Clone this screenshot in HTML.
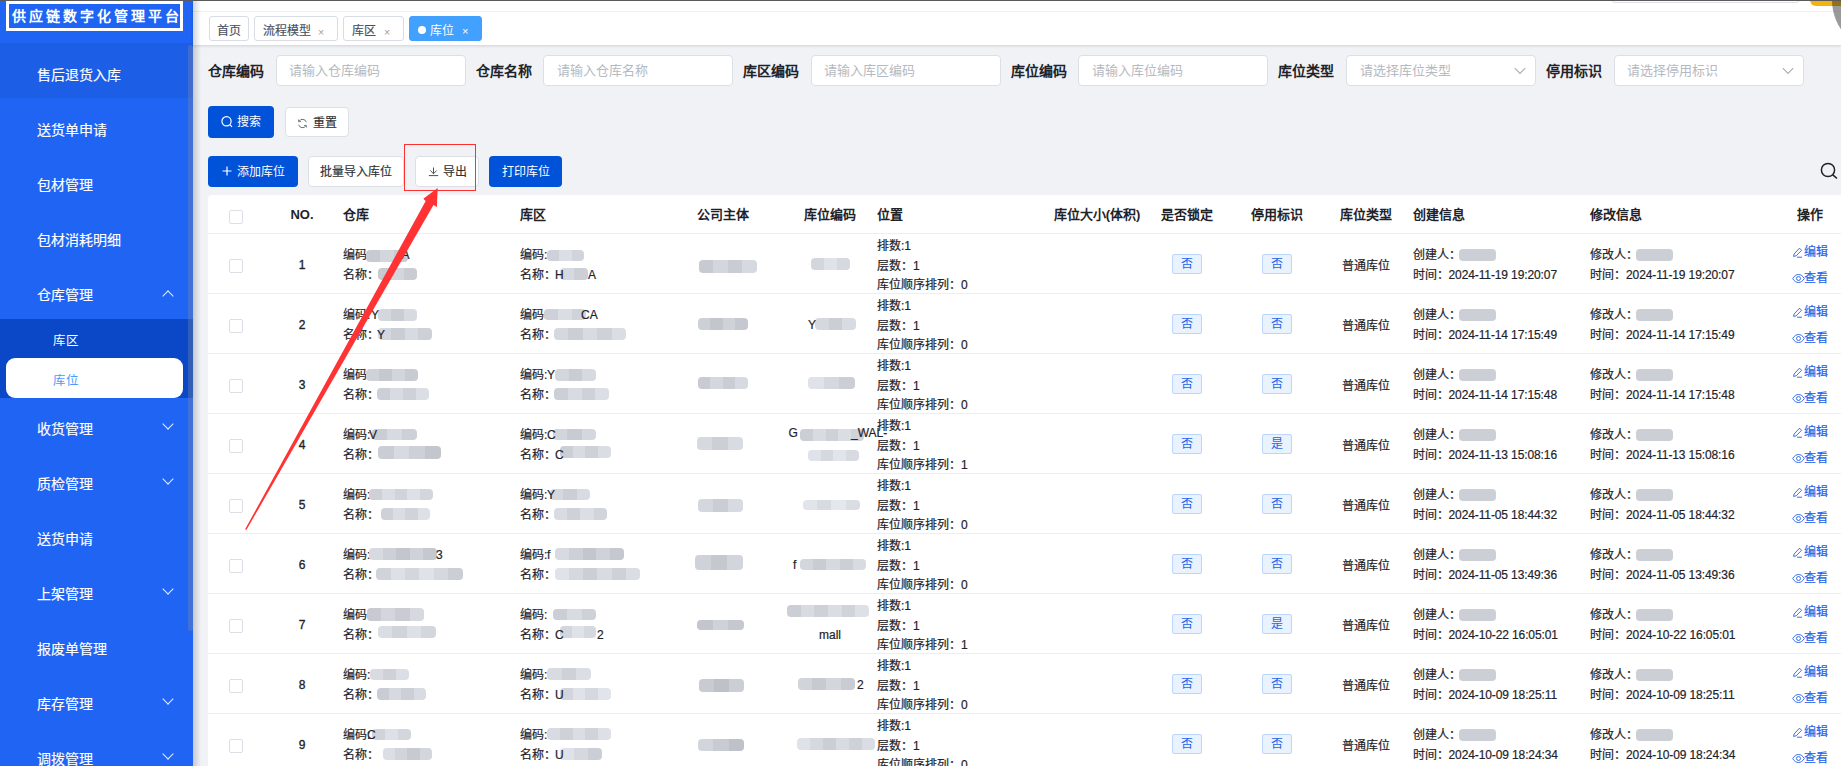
<!DOCTYPE html>
<html lang="zh-CN"><head><meta charset="utf-8"><title>库位</title>
<style>
*{box-sizing:border-box;margin:0;padding:0}
html,body{width:1841px;height:766px;overflow:hidden;background:#f0f2f5;font-family:"Liberation Sans", sans-serif;}
.a{position:absolute;white-space:nowrap}
.sb{position:absolute;left:0;top:0;width:193px;height:766px;background:#1f64f3;overflow:hidden}
.mi{position:absolute;left:37.4px;color:#fff;font-size:14px;line-height:20px;height:20px;-webkit-text-stroke:0.15px #fff}
.chev{position:absolute;left:164px;width:8px;height:8px;border-right:1.3px solid #e6eeff;border-bottom:1.3px solid #e6eeff}
.tab{position:absolute;top:16px;height:25px;border:1px solid #d8dce5;border-radius:3px;background:#fff;font-size:12px;color:#495060;line-height:29px;-webkit-text-stroke:0.15px #495060}
.lbl{position:absolute;top:61px;font-size:14px;font-weight:bold;color:#1f2329;line-height:20px}
.inp{position:absolute;top:55px;width:190px;height:31px;background:#fff;border:1px solid #dcdfe6;border-radius:4px;font-size:13px;color:#b5b9c1;line-height:29px;padding-left:12.5px}
.btn{position:absolute;height:32px;border-radius:4px;font-size:12px;line-height:32px;text-align:center}
.bp{background:#0052d9;color:#fff}
.bw{background:#fff;color:#303133;border:1px solid #dcdfe6;line-height:30px;-webkit-text-stroke:0.15px #303133}
.th{position:absolute;top:205px;font-size:13px;font-weight:bold;color:#1f2329;line-height:20px}
.td{position:absolute;font-size:12px;color:#1f2329;line-height:20px;-webkit-text-stroke:0.2px #1f2329}
.tag{position:absolute;width:30px;height:20px;background:#e9f2ff;border:1px solid #bcd6fb;border-radius:2px;color:#1f63e8;font-size:12px;line-height:18px;text-align:center}
.cb{position:absolute;left:229px;width:14px;height:14px;border:1px solid #dcdfe6;border-radius:2px;background:#fff}
.bl{position:absolute;background:#cfd1d7;border-radius:4px;filter:blur(0.6px)}
.lnk{position:absolute;left:1792px;font-size:12px;color:#2563e6;line-height:20px;-webkit-text-stroke:0.2px #2563e6}
</style></head><body>

<div class="sb">
<div class="a" style="left:0;top:42.8px;width:193px;height:55.4px;background:#1d5ee7"></div>
<div class="a" style="left:6px;top:1px;width:177px;height:29.5px;border:3px solid #fff"></div>
<div class="a" style="left:12px;top:6px;font-size:14px;font-weight:bold;color:#fff;letter-spacing:3px;line-height:20px">供应链数字化管理平台</div>
<div class="a" style="left:0;top:319px;width:193px;height:79px;background:#0b48c8"></div>
<div class="a" style="left:6.2px;top:358.3px;width:177.2px;height:39.4px;background:#fff;border-radius:9px"></div>
<div class="a" style="left:53px;top:331px;font-size:12.5px;color:#fff;line-height:20px">库区</div>
<div class="a" style="left:53px;top:370.5px;font-size:12.5px;color:#4a9bff;line-height:20px">库位</div>
<div class="mi" style="top:64.9px">售后退货入库</div>
<div class="mi" style="top:119.9px">送货单申请</div>
<div class="mi" style="top:175.0px">包材管理</div>
<div class="mi" style="top:230.0px">包材消耗明细</div>
<div class="mi" style="top:285.1px">仓库管理</div>
<div class="chev" style="top:292.1px;transform:rotate(-135deg)"></div>
<div class="mi" style="top:418.8px">收货管理</div>
<div class="chev" style="top:419.8px;transform:rotate(45deg)"></div>
<div class="mi" style="top:473.9px">质检管理</div>
<div class="chev" style="top:474.9px;transform:rotate(45deg)"></div>
<div class="mi" style="top:528.9px">送货申请</div>
<div class="mi" style="top:584.0px">上架管理</div>
<div class="chev" style="top:585.0px;transform:rotate(45deg)"></div>
<div class="mi" style="top:639.0px">报废单管理</div>
<div class="mi" style="top:694.0px">库存管理</div>
<div class="chev" style="top:695.0px;transform:rotate(45deg)"></div>
<div class="mi" style="top:749.1px">调拨管理</div>
<div class="chev" style="top:750.1px;transform:rotate(45deg)"></div>
<div class="a" style="left:187.5px;top:45px;width:5.5px;height:586px;background:rgba(144,147,153,0.3);border-radius:3px"></div>
</div>
<div class="a" style="left:193px;top:0;width:1648px;height:44.5px;background:#fff;box-shadow:0 1px 3px 0 rgba(0,0,0,.12),0 0 3px 0 rgba(0,0,0,.04)"></div>
<div class="a" style="left:193px;top:11px;width:1648px;height:1px;background:#f0f0f0"></div>
<div class="a" style="left:193px;top:0;width:8px;height:766px;background:linear-gradient(to right,rgba(0,21,41,0.18),rgba(0,21,41,0))"></div>
<div class="tab" style="left:208.5px;width:40px;text-align:center">首页</div>
<div class="tab" style="left:254px;width:83.5px;padding-left:7.5px">流程模型<span class="a" style="left:63px;top:0.5px;font-size:10.5px;color:#9a9ea6;-webkit-text-stroke:0">×</span></div>
<div class="tab" style="left:343px;width:60.5px;padding-left:7.5px">库区<span class="a" style="left:40px;top:0.5px;font-size:10.5px;color:#9a9ea6;-webkit-text-stroke:0">×</span></div>
<div class="tab" style="left:409px;top:15.8px;height:25.2px;width:72.5px;background:#42a0ff;border-color:#42a0ff;color:#fff;-webkit-text-stroke:0;padding-left:20px">库位<span class="a" style="left:7.6px;top:9.2px;width:8px;height:8px;border-radius:50%;background:#fff"></span><span class="a" style="left:52px;top:0.5px;font-size:11px;color:#fff">×</span></div>
<div class="lbl" style="left:208.0px">仓库编码</div>
<div class="inp" style="left:275.6px">请输入仓库编码</div>
<div class="lbl" style="left:475.6px">仓库名称</div>
<div class="inp" style="left:543.2px">请输入仓库名称</div>
<div class="lbl" style="left:743.2px">库区编码</div>
<div class="inp" style="left:810.8px">请输入库区编码</div>
<div class="lbl" style="left:1010.8px">库位编码</div>
<div class="inp" style="left:1078.4px">请输入库位编码</div>
<div class="lbl" style="left:1278.4px">库位类型</div>
<div class="inp" style="left:1346.0px">请选择库位类型</div>
<svg class="a" style="left:1513.0px;top:66px" width="14" height="10" viewBox="0 0 14 10"><path d="M1.8 2.2L7 7.4L12.2 2.2" fill="none" stroke="#a8adb7" stroke-width="1.1"/></svg>
<div class="lbl" style="left:1546.0px">停用标识</div>
<div class="inp" style="left:1613.6px">请选择停用标识</div>
<svg class="a" style="left:1780.6px;top:66px" width="14" height="10" viewBox="0 0 14 10"><path d="M1.8 2.2L7 7.4L12.2 2.2" fill="none" stroke="#a8adb7" stroke-width="1.1"/></svg>
<div class="btn bp" style="left:208px;top:106px;width:66px;padding-left:16.5px"><svg class="a" style="left:13px;top:10px" width="12" height="12" viewBox="0 0 12 12"><circle cx="5.5" cy="5.3" r="4.6" fill="none" stroke="#fff" stroke-width="1.2"/><path d="M8.8 8.6L11 10.8" stroke="#fff" stroke-width="1.2"/></svg>搜索</div>
<div class="btn bw" style="left:284.7px;top:106.7px;width:64.3px;height:30.7px;padding-left:16.5px"><svg class="a" style="left:11.8px;top:10px" width="11" height="11" viewBox="0 0 11 11"><path d="M9.3 4.2A4 4 0 0 0 2 3.3" fill="none" stroke="#6b7079" stroke-width="1"/><path d="M1.7 6.8A4 4 0 0 0 9 7.7" fill="none" stroke="#6b7079" stroke-width="1"/><path d="M1.3 1.5L1.8 3.8L4 3.3" fill="none" stroke="#6b7079" stroke-width="0.9"/><path d="M9.7 9.5L9.2 7.2L7 7.7" fill="none" stroke="#6b7079" stroke-width="0.9"/></svg>重置</div>
<div class="btn bp" style="left:208px;top:155.5px;width:89.5px;height:31.5px;line-height:33.5px;padding-left:17px"><svg class="a" style="left:14px;top:10px" width="10" height="10" viewBox="0 0 10 10"><path d="M5 0.5V9.5M0.5 5H9.5" stroke="#fff" stroke-width="1.2"/></svg>添加库位</div>
<div class="btn bw" style="left:307.5px;top:155.5px;width:96px;height:31.5px;line-height:31.5px">批量导入库位</div>
<div class="btn bw" style="left:414.8px;top:155.8px;width:64.2px;height:31.2px;line-height:31.5px;padding-left:17px"><svg class="a" style="left:12px;top:10px" width="11" height="10" viewBox="0 0 11 10"><path d="M5.5 0.5V6.6M2.3 3.5L5.5 6.7L8.7 3.5" fill="none" stroke="#3a3f47" stroke-width="0.9"/><path d="M0.8 8.6H10.2" stroke="#3a3f47" stroke-width="0.9"/></svg>导出</div>
<div class="btn bp" style="left:489.3px;top:155.5px;width:73px;height:31.5px;line-height:33.5px">打印库位</div>
<svg class="a" style="left:1818px;top:160px" width="23" height="22" viewBox="0 0 23 22"><circle cx="10" cy="10" r="6.6" fill="none" stroke="#1f2329" stroke-width="1.5"/><path d="M14.8 14.8L19 18.5" stroke="#1f2329" stroke-width="1.6"/></svg>
<div class="a" style="left:208px;top:195px;width:1640px;height:600px;background:#fff;border-radius:4px 0 0 0"></div>
<div class="a" style="left:208px;top:233px;width:1633px;height:1px;background:#ebeef5"></div>
<div class="a" style="left:208px;top:293px;width:1633px;height:1px;background:#ebeef5"></div>
<div class="a" style="left:208px;top:353px;width:1633px;height:1px;background:#ebeef5"></div>
<div class="a" style="left:208px;top:413px;width:1633px;height:1px;background:#ebeef5"></div>
<div class="a" style="left:208px;top:473px;width:1633px;height:1px;background:#ebeef5"></div>
<div class="a" style="left:208px;top:533px;width:1633px;height:1px;background:#ebeef5"></div>
<div class="a" style="left:208px;top:593px;width:1633px;height:1px;background:#ebeef5"></div>
<div class="a" style="left:208px;top:653px;width:1633px;height:1px;background:#ebeef5"></div>
<div class="a" style="left:208px;top:713px;width:1633px;height:1px;background:#ebeef5"></div>
<div class="a" style="left:208px;top:773px;width:1633px;height:1px;background:#ebeef5"></div>
<div class="cb" style="top:210px"></div>
<div class="th" style="left:282.0px;width:40px;text-align:center">NO.</div>
<div class="th" style="left:343px">仓库</div>
<div class="th" style="left:520px">库区</div>
<div class="th" style="left:682.7px;width:80px;text-align:center">公司主体</div>
<div class="th" style="left:790.0px;width:80px;text-align:center">库位编码</div>
<div class="th" style="left:877px">位置</div>
<div class="th" style="left:1037.0px;width:120px;text-align:center">库位大小(体积)</div>
<div class="th" style="left:1147.0px;width:80px;text-align:center">是否锁定</div>
<div class="th" style="left:1236.5px;width:80px;text-align:center">停用标识</div>
<div class="th" style="left:1326.0px;width:80px;text-align:center">库位类型</div>
<div class="th" style="left:1412.5px">创建信息</div>
<div class="th" style="left:1590px">修改信息</div>
<div class="th" style="left:1779.5px;width:60px;text-align:center">操作</div>
<div class="cb" style="top:258.5px"></div>
<div class="td" style="left:282px;width:40px;text-align:center;top:254.8px;-webkit-text-stroke:0.35px #1f2329">1</div>
<div class="td" style="left:343px;top:245px">编码:</div>
<div class="td" style="left:343px;top:265px">名称：</div>
<div class="td" style="left:520px;top:245px">编码:</div>
<div class="td" style="left:520px;top:265px">名称：</div>
<div class="td" style="left:877px;top:235.5px">排数:1</div>
<div class="td" style="left:877px;top:255.5px">层数：1</div>
<div class="td" style="left:877px;top:275.3px">库位顺序排列：0</div>
<div class="tag" style="left:1172px;top:253.7px">否</div>
<div class="tag" style="left:1262px;top:253.7px">否</div>
<div class="td" style="left:1326px;width:80px;text-align:center;top:255.5px">普通库位</div>
<div class="td" style="left:1412.5px;top:245px">创建人：</div>
<div class="td" style="left:1412.5px;top:265.3px">时间：<span style="letter-spacing:-0.11px">2024-11-19 19:20:07</span></div>
<div class="td" style="left:1590px;top:245px">修改人：</div>
<div class="td" style="left:1590px;top:265.3px">时间：<span style="letter-spacing:-0.11px">2024-11-19 19:20:07</span></div>
<div class="lnk" style="top:242px;padding-left:11.8px"><svg class="a" style="left:0;top:5px" width="11" height="11" viewBox="0 0 11 11"><path d="M7.5 1.2L9.6 3.3L4 8.9L1.6 9.4L2.1 7Z" fill="none" stroke="#2563e6" stroke-width="0.9"/><path d="M5 10.2H10" stroke="#2563e6" stroke-width="0.9"/></svg>编辑</div>
<div class="lnk" style="top:268px;padding-left:11.8px"><svg class="a" style="left:-0.5px;top:5px" width="13" height="11" viewBox="0 0 13 11"><path d="M0.7 5.5C2.5 2.5 4.5 1.5 6.5 1.5S10.5 2.5 12.3 5.5C10.5 8.5 8.5 9.5 6.5 9.5S2.5 8.5 0.7 5.5Z" fill="none" stroke="#2563e6" stroke-width="0.9"/><circle cx="6.5" cy="5.5" r="2" fill="none" stroke="#2563e6" stroke-width="0.9"/></svg>查看</div>
<div class="cb" style="top:318.5px"></div>
<div class="td" style="left:282px;width:40px;text-align:center;top:314.8px;-webkit-text-stroke:0.35px #1f2329">2</div>
<div class="td" style="left:343px;top:305px">编码:</div>
<div class="td" style="left:343px;top:325px">名称：</div>
<div class="td" style="left:520px;top:305px">编码:</div>
<div class="td" style="left:520px;top:325px">名称：</div>
<div class="td" style="left:877px;top:295.5px">排数:1</div>
<div class="td" style="left:877px;top:315.5px">层数：1</div>
<div class="td" style="left:877px;top:335.3px">库位顺序排列：0</div>
<div class="tag" style="left:1172px;top:313.7px">否</div>
<div class="tag" style="left:1262px;top:313.7px">否</div>
<div class="td" style="left:1326px;width:80px;text-align:center;top:315.5px">普通库位</div>
<div class="td" style="left:1412.5px;top:305px">创建人：</div>
<div class="td" style="left:1412.5px;top:325.3px">时间：<span style="letter-spacing:-0.11px">2024-11-14 17:15:49</span></div>
<div class="td" style="left:1590px;top:305px">修改人：</div>
<div class="td" style="left:1590px;top:325.3px">时间：<span style="letter-spacing:-0.11px">2024-11-14 17:15:49</span></div>
<div class="lnk" style="top:302px;padding-left:11.8px"><svg class="a" style="left:0;top:5px" width="11" height="11" viewBox="0 0 11 11"><path d="M7.5 1.2L9.6 3.3L4 8.9L1.6 9.4L2.1 7Z" fill="none" stroke="#2563e6" stroke-width="0.9"/><path d="M5 10.2H10" stroke="#2563e6" stroke-width="0.9"/></svg>编辑</div>
<div class="lnk" style="top:328px;padding-left:11.8px"><svg class="a" style="left:-0.5px;top:5px" width="13" height="11" viewBox="0 0 13 11"><path d="M0.7 5.5C2.5 2.5 4.5 1.5 6.5 1.5S10.5 2.5 12.3 5.5C10.5 8.5 8.5 9.5 6.5 9.5S2.5 8.5 0.7 5.5Z" fill="none" stroke="#2563e6" stroke-width="0.9"/><circle cx="6.5" cy="5.5" r="2" fill="none" stroke="#2563e6" stroke-width="0.9"/></svg>查看</div>
<div class="cb" style="top:378.5px"></div>
<div class="td" style="left:282px;width:40px;text-align:center;top:374.8px;-webkit-text-stroke:0.35px #1f2329">3</div>
<div class="td" style="left:343px;top:365px">编码:</div>
<div class="td" style="left:343px;top:385px">名称：</div>
<div class="td" style="left:520px;top:365px">编码:</div>
<div class="td" style="left:520px;top:385px">名称：</div>
<div class="td" style="left:877px;top:355.5px">排数:1</div>
<div class="td" style="left:877px;top:375.5px">层数：1</div>
<div class="td" style="left:877px;top:395.3px">库位顺序排列：0</div>
<div class="tag" style="left:1172px;top:373.7px">否</div>
<div class="tag" style="left:1262px;top:373.7px">否</div>
<div class="td" style="left:1326px;width:80px;text-align:center;top:375.5px">普通库位</div>
<div class="td" style="left:1412.5px;top:365px">创建人：</div>
<div class="td" style="left:1412.5px;top:385.3px">时间：<span style="letter-spacing:-0.11px">2024-11-14 17:15:48</span></div>
<div class="td" style="left:1590px;top:365px">修改人：</div>
<div class="td" style="left:1590px;top:385.3px">时间：<span style="letter-spacing:-0.11px">2024-11-14 17:15:48</span></div>
<div class="lnk" style="top:362px;padding-left:11.8px"><svg class="a" style="left:0;top:5px" width="11" height="11" viewBox="0 0 11 11"><path d="M7.5 1.2L9.6 3.3L4 8.9L1.6 9.4L2.1 7Z" fill="none" stroke="#2563e6" stroke-width="0.9"/><path d="M5 10.2H10" stroke="#2563e6" stroke-width="0.9"/></svg>编辑</div>
<div class="lnk" style="top:388px;padding-left:11.8px"><svg class="a" style="left:-0.5px;top:5px" width="13" height="11" viewBox="0 0 13 11"><path d="M0.7 5.5C2.5 2.5 4.5 1.5 6.5 1.5S10.5 2.5 12.3 5.5C10.5 8.5 8.5 9.5 6.5 9.5S2.5 8.5 0.7 5.5Z" fill="none" stroke="#2563e6" stroke-width="0.9"/><circle cx="6.5" cy="5.5" r="2" fill="none" stroke="#2563e6" stroke-width="0.9"/></svg>查看</div>
<div class="cb" style="top:438.5px"></div>
<div class="td" style="left:282px;width:40px;text-align:center;top:434.8px;-webkit-text-stroke:0.35px #1f2329">4</div>
<div class="td" style="left:343px;top:425px">编码:</div>
<div class="td" style="left:343px;top:445px">名称：</div>
<div class="td" style="left:520px;top:425px">编码:</div>
<div class="td" style="left:520px;top:445px">名称：</div>
<div class="td" style="left:877px;top:415.5px">排数:1</div>
<div class="td" style="left:877px;top:435.5px">层数：1</div>
<div class="td" style="left:877px;top:455.3px">库位顺序排列：1</div>
<div class="tag" style="left:1172px;top:433.7px">否</div>
<div class="tag" style="left:1262px;top:433.7px">是</div>
<div class="td" style="left:1326px;width:80px;text-align:center;top:435.5px">普通库位</div>
<div class="td" style="left:1412.5px;top:425px">创建人：</div>
<div class="td" style="left:1412.5px;top:445.3px">时间：<span style="letter-spacing:-0.11px">2024-11-13 15:08:16</span></div>
<div class="td" style="left:1590px;top:425px">修改人：</div>
<div class="td" style="left:1590px;top:445.3px">时间：<span style="letter-spacing:-0.11px">2024-11-13 15:08:16</span></div>
<div class="lnk" style="top:422px;padding-left:11.8px"><svg class="a" style="left:0;top:5px" width="11" height="11" viewBox="0 0 11 11"><path d="M7.5 1.2L9.6 3.3L4 8.9L1.6 9.4L2.1 7Z" fill="none" stroke="#2563e6" stroke-width="0.9"/><path d="M5 10.2H10" stroke="#2563e6" stroke-width="0.9"/></svg>编辑</div>
<div class="lnk" style="top:448px;padding-left:11.8px"><svg class="a" style="left:-0.5px;top:5px" width="13" height="11" viewBox="0 0 13 11"><path d="M0.7 5.5C2.5 2.5 4.5 1.5 6.5 1.5S10.5 2.5 12.3 5.5C10.5 8.5 8.5 9.5 6.5 9.5S2.5 8.5 0.7 5.5Z" fill="none" stroke="#2563e6" stroke-width="0.9"/><circle cx="6.5" cy="5.5" r="2" fill="none" stroke="#2563e6" stroke-width="0.9"/></svg>查看</div>
<div class="cb" style="top:498.5px"></div>
<div class="td" style="left:282px;width:40px;text-align:center;top:494.8px;-webkit-text-stroke:0.35px #1f2329">5</div>
<div class="td" style="left:343px;top:485px">编码:</div>
<div class="td" style="left:343px;top:505px">名称：</div>
<div class="td" style="left:520px;top:485px">编码:</div>
<div class="td" style="left:520px;top:505px">名称：</div>
<div class="td" style="left:877px;top:475.5px">排数:1</div>
<div class="td" style="left:877px;top:495.5px">层数：1</div>
<div class="td" style="left:877px;top:515.3px">库位顺序排列：0</div>
<div class="tag" style="left:1172px;top:493.7px">否</div>
<div class="tag" style="left:1262px;top:493.7px">否</div>
<div class="td" style="left:1326px;width:80px;text-align:center;top:495.5px">普通库位</div>
<div class="td" style="left:1412.5px;top:485px">创建人：</div>
<div class="td" style="left:1412.5px;top:505.3px">时间：<span style="letter-spacing:-0.11px">2024-11-05 18:44:32</span></div>
<div class="td" style="left:1590px;top:485px">修改人：</div>
<div class="td" style="left:1590px;top:505.3px">时间：<span style="letter-spacing:-0.11px">2024-11-05 18:44:32</span></div>
<div class="lnk" style="top:482px;padding-left:11.8px"><svg class="a" style="left:0;top:5px" width="11" height="11" viewBox="0 0 11 11"><path d="M7.5 1.2L9.6 3.3L4 8.9L1.6 9.4L2.1 7Z" fill="none" stroke="#2563e6" stroke-width="0.9"/><path d="M5 10.2H10" stroke="#2563e6" stroke-width="0.9"/></svg>编辑</div>
<div class="lnk" style="top:508px;padding-left:11.8px"><svg class="a" style="left:-0.5px;top:5px" width="13" height="11" viewBox="0 0 13 11"><path d="M0.7 5.5C2.5 2.5 4.5 1.5 6.5 1.5S10.5 2.5 12.3 5.5C10.5 8.5 8.5 9.5 6.5 9.5S2.5 8.5 0.7 5.5Z" fill="none" stroke="#2563e6" stroke-width="0.9"/><circle cx="6.5" cy="5.5" r="2" fill="none" stroke="#2563e6" stroke-width="0.9"/></svg>查看</div>
<div class="cb" style="top:558.5px"></div>
<div class="td" style="left:282px;width:40px;text-align:center;top:554.8px;-webkit-text-stroke:0.35px #1f2329">6</div>
<div class="td" style="left:343px;top:545px">编码:</div>
<div class="td" style="left:343px;top:565px">名称：</div>
<div class="td" style="left:520px;top:545px">编码:</div>
<div class="td" style="left:520px;top:565px">名称：</div>
<div class="td" style="left:877px;top:535.5px">排数:1</div>
<div class="td" style="left:877px;top:555.5px">层数：1</div>
<div class="td" style="left:877px;top:575.3px">库位顺序排列：0</div>
<div class="tag" style="left:1172px;top:553.7px">否</div>
<div class="tag" style="left:1262px;top:553.7px">否</div>
<div class="td" style="left:1326px;width:80px;text-align:center;top:555.5px">普通库位</div>
<div class="td" style="left:1412.5px;top:545px">创建人：</div>
<div class="td" style="left:1412.5px;top:565.3px">时间：<span style="letter-spacing:-0.11px">2024-11-05 13:49:36</span></div>
<div class="td" style="left:1590px;top:545px">修改人：</div>
<div class="td" style="left:1590px;top:565.3px">时间：<span style="letter-spacing:-0.11px">2024-11-05 13:49:36</span></div>
<div class="lnk" style="top:542px;padding-left:11.8px"><svg class="a" style="left:0;top:5px" width="11" height="11" viewBox="0 0 11 11"><path d="M7.5 1.2L9.6 3.3L4 8.9L1.6 9.4L2.1 7Z" fill="none" stroke="#2563e6" stroke-width="0.9"/><path d="M5 10.2H10" stroke="#2563e6" stroke-width="0.9"/></svg>编辑</div>
<div class="lnk" style="top:568px;padding-left:11.8px"><svg class="a" style="left:-0.5px;top:5px" width="13" height="11" viewBox="0 0 13 11"><path d="M0.7 5.5C2.5 2.5 4.5 1.5 6.5 1.5S10.5 2.5 12.3 5.5C10.5 8.5 8.5 9.5 6.5 9.5S2.5 8.5 0.7 5.5Z" fill="none" stroke="#2563e6" stroke-width="0.9"/><circle cx="6.5" cy="5.5" r="2" fill="none" stroke="#2563e6" stroke-width="0.9"/></svg>查看</div>
<div class="cb" style="top:618.5px"></div>
<div class="td" style="left:282px;width:40px;text-align:center;top:614.8px;-webkit-text-stroke:0.35px #1f2329">7</div>
<div class="td" style="left:343px;top:605px">编码:</div>
<div class="td" style="left:343px;top:625px">名称：</div>
<div class="td" style="left:520px;top:605px">编码:</div>
<div class="td" style="left:520px;top:625px">名称：</div>
<div class="td" style="left:877px;top:595.5px">排数:1</div>
<div class="td" style="left:877px;top:615.5px">层数：1</div>
<div class="td" style="left:877px;top:635.3px">库位顺序排列：1</div>
<div class="tag" style="left:1172px;top:613.7px">否</div>
<div class="tag" style="left:1262px;top:613.7px">是</div>
<div class="td" style="left:1326px;width:80px;text-align:center;top:615.5px">普通库位</div>
<div class="td" style="left:1412.5px;top:605px">创建人：</div>
<div class="td" style="left:1412.5px;top:625.3px">时间：<span style="letter-spacing:-0.11px">2024-10-22 16:05:01</span></div>
<div class="td" style="left:1590px;top:605px">修改人：</div>
<div class="td" style="left:1590px;top:625.3px">时间：<span style="letter-spacing:-0.11px">2024-10-22 16:05:01</span></div>
<div class="lnk" style="top:602px;padding-left:11.8px"><svg class="a" style="left:0;top:5px" width="11" height="11" viewBox="0 0 11 11"><path d="M7.5 1.2L9.6 3.3L4 8.9L1.6 9.4L2.1 7Z" fill="none" stroke="#2563e6" stroke-width="0.9"/><path d="M5 10.2H10" stroke="#2563e6" stroke-width="0.9"/></svg>编辑</div>
<div class="lnk" style="top:628px;padding-left:11.8px"><svg class="a" style="left:-0.5px;top:5px" width="13" height="11" viewBox="0 0 13 11"><path d="M0.7 5.5C2.5 2.5 4.5 1.5 6.5 1.5S10.5 2.5 12.3 5.5C10.5 8.5 8.5 9.5 6.5 9.5S2.5 8.5 0.7 5.5Z" fill="none" stroke="#2563e6" stroke-width="0.9"/><circle cx="6.5" cy="5.5" r="2" fill="none" stroke="#2563e6" stroke-width="0.9"/></svg>查看</div>
<div class="cb" style="top:678.5px"></div>
<div class="td" style="left:282px;width:40px;text-align:center;top:674.8px;-webkit-text-stroke:0.35px #1f2329">8</div>
<div class="td" style="left:343px;top:665px">编码:</div>
<div class="td" style="left:343px;top:685px">名称：</div>
<div class="td" style="left:520px;top:665px">编码:</div>
<div class="td" style="left:520px;top:685px">名称：</div>
<div class="td" style="left:877px;top:655.5px">排数:1</div>
<div class="td" style="left:877px;top:675.5px">层数：1</div>
<div class="td" style="left:877px;top:695.3px">库位顺序排列：0</div>
<div class="tag" style="left:1172px;top:673.7px">否</div>
<div class="tag" style="left:1262px;top:673.7px">否</div>
<div class="td" style="left:1326px;width:80px;text-align:center;top:675.5px">普通库位</div>
<div class="td" style="left:1412.5px;top:665px">创建人：</div>
<div class="td" style="left:1412.5px;top:685.3px">时间：<span style="letter-spacing:-0.11px">2024-10-09 18:25:11</span></div>
<div class="td" style="left:1590px;top:665px">修改人：</div>
<div class="td" style="left:1590px;top:685.3px">时间：<span style="letter-spacing:-0.11px">2024-10-09 18:25:11</span></div>
<div class="lnk" style="top:662px;padding-left:11.8px"><svg class="a" style="left:0;top:5px" width="11" height="11" viewBox="0 0 11 11"><path d="M7.5 1.2L9.6 3.3L4 8.9L1.6 9.4L2.1 7Z" fill="none" stroke="#2563e6" stroke-width="0.9"/><path d="M5 10.2H10" stroke="#2563e6" stroke-width="0.9"/></svg>编辑</div>
<div class="lnk" style="top:688px;padding-left:11.8px"><svg class="a" style="left:-0.5px;top:5px" width="13" height="11" viewBox="0 0 13 11"><path d="M0.7 5.5C2.5 2.5 4.5 1.5 6.5 1.5S10.5 2.5 12.3 5.5C10.5 8.5 8.5 9.5 6.5 9.5S2.5 8.5 0.7 5.5Z" fill="none" stroke="#2563e6" stroke-width="0.9"/><circle cx="6.5" cy="5.5" r="2" fill="none" stroke="#2563e6" stroke-width="0.9"/></svg>查看</div>
<div class="cb" style="top:738.5px"></div>
<div class="td" style="left:282px;width:40px;text-align:center;top:734.8px;-webkit-text-stroke:0.35px #1f2329">9</div>
<div class="td" style="left:343px;top:725px">编码:</div>
<div class="td" style="left:343px;top:745px">名称：</div>
<div class="td" style="left:520px;top:725px">编码:</div>
<div class="td" style="left:520px;top:745px">名称：</div>
<div class="td" style="left:877px;top:715.5px">排数:1</div>
<div class="td" style="left:877px;top:735.5px">层数：1</div>
<div class="td" style="left:877px;top:755.3px">库位顺序排列：0</div>
<div class="tag" style="left:1172px;top:733.7px">否</div>
<div class="tag" style="left:1262px;top:733.7px">否</div>
<div class="td" style="left:1326px;width:80px;text-align:center;top:735.5px">普通库位</div>
<div class="td" style="left:1412.5px;top:725px">创建人：</div>
<div class="td" style="left:1412.5px;top:745.3px">时间：<span style="letter-spacing:-0.11px">2024-10-09 18:24:34</span></div>
<div class="td" style="left:1590px;top:725px">修改人：</div>
<div class="td" style="left:1590px;top:745.3px">时间：<span style="letter-spacing:-0.11px">2024-10-09 18:24:34</span></div>
<div class="lnk" style="top:722px;padding-left:11.8px"><svg class="a" style="left:0;top:5px" width="11" height="11" viewBox="0 0 11 11"><path d="M7.5 1.2L9.6 3.3L4 8.9L1.6 9.4L2.1 7Z" fill="none" stroke="#2563e6" stroke-width="0.9"/><path d="M5 10.2H10" stroke="#2563e6" stroke-width="0.9"/></svg>编辑</div>
<div class="lnk" style="top:748px;padding-left:11.8px"><svg class="a" style="left:-0.5px;top:5px" width="13" height="11" viewBox="0 0 13 11"><path d="M0.7 5.5C2.5 2.5 4.5 1.5 6.5 1.5S10.5 2.5 12.3 5.5C10.5 8.5 8.5 9.5 6.5 9.5S2.5 8.5 0.7 5.5Z" fill="none" stroke="#2563e6" stroke-width="0.9"/><circle cx="6.5" cy="5.5" r="2" fill="none" stroke="#2563e6" stroke-width="0.9"/></svg>查看</div>
<div class="bl" style="left:366px;top:250.0px;width:42px;height:12px;background:linear-gradient(to right,rgb(199,202,209) 0.0%,rgb(199,202,209) 33.3%,rgb(211,214,221) 33.3%,rgb(211,214,221) 66.7%,rgb(201,204,211) 66.7%,rgb(201,204,211) 100.0%)"></div>
<div class="bl" style="left:378px;top:268.0px;width:39px;height:12px;background:linear-gradient(to right,rgb(199,202,209) 0.0%,rgb(199,202,209) 33.3%,rgb(211,214,221) 33.3%,rgb(211,214,221) 66.7%,rgb(201,204,211) 66.7%,rgb(201,204,211) 100.0%)"></div>
<div class="bl" style="left:547px;top:249.5px;width:37px;height:11px;background:linear-gradient(to right,rgb(206,209,216) 0.0%,rgb(206,209,216) 33.3%,rgb(219,222,229) 33.3%,rgb(219,222,229) 66.7%,rgb(209,212,219) 66.7%,rgb(209,212,219) 100.0%)"></div>
<div class="bl" style="left:560px;top:268.0px;width:28px;height:12px;background:linear-gradient(to right,rgb(214,217,224) 0.0%,rgb(214,217,224) 50.0%,rgb(204,207,214) 50.0%,rgb(204,207,214) 100.0%)"></div>
<div class="bl" style="left:699px;top:259.5px;width:58px;height:13px;background:linear-gradient(to right,rgb(199,202,209) 0.0%,rgb(199,202,209) 25.0%,rgb(211,214,221) 25.0%,rgb(211,214,221) 50.0%,rgb(201,204,211) 50.0%,rgb(201,204,211) 75.0%,rgb(214,217,224) 75.0%,rgb(214,217,224) 100.0%)"></div>
<div class="bl" style="left:811px;top:257.5px;width:39px;height:12px;background:linear-gradient(to right,rgb(211,214,221) 0.0%,rgb(211,214,221) 33.3%,rgb(223,226,233) 33.3%,rgb(223,226,233) 66.7%,rgb(213,216,223) 66.7%,rgb(213,216,223) 100.0%)"></div>
<div class="bl" style="left:378px;top:308.5px;width:39px;height:12px;background:linear-gradient(to right,rgb(212,215,222) 0.0%,rgb(212,215,222) 33.3%,rgb(202,205,212) 33.3%,rgb(202,205,212) 66.7%,rgb(215,218,225) 66.7%,rgb(215,218,225) 100.0%)"></div>
<div class="bl" style="left:378px;top:328.0px;width:54px;height:12px;background:linear-gradient(to right,rgb(212,215,222) 0.0%,rgb(212,215,222) 25.0%,rgb(202,205,212) 25.0%,rgb(202,205,212) 50.0%,rgb(215,218,225) 50.0%,rgb(215,218,225) 75.0%,rgb(205,208,215) 75.0%,rgb(205,208,215) 100.0%)"></div>
<div class="bl" style="left:544px;top:309.0px;width:42px;height:11px;background:linear-gradient(to right,rgb(206,209,216) 0.0%,rgb(206,209,216) 33.3%,rgb(218,221,228) 33.3%,rgb(218,221,228) 66.7%,rgb(208,211,218) 66.7%,rgb(208,211,218) 100.0%)"></div>
<div class="bl" style="left:554px;top:328.0px;width:72px;height:12px;background:linear-gradient(to right,rgb(213,216,223) 0.0%,rgb(213,216,223) 20.0%,rgb(203,206,213) 20.0%,rgb(203,206,213) 40.0%,rgb(216,219,226) 40.0%,rgb(216,219,226) 60.0%,rgb(206,209,216) 60.0%,rgb(206,209,216) 80.0%,rgb(218,221,228) 80.0%,rgb(218,221,228) 100.0%)"></div>
<div class="bl" style="left:698px;top:317.5px;width:50px;height:12px;background:linear-gradient(to right,rgb(205,208,215) 0.0%,rgb(205,208,215) 25.0%,rgb(195,198,205) 25.0%,rgb(195,198,205) 50.0%,rgb(207,210,217) 50.0%,rgb(207,210,217) 75.0%,rgb(197,200,207) 75.0%,rgb(197,200,207) 100.0%)"></div>
<div class="bl" style="left:815px;top:317.5px;width:41px;height:12px;background:linear-gradient(to right,rgb(213,216,223) 0.0%,rgb(213,216,223) 33.3%,rgb(203,206,213) 33.3%,rgb(203,206,213) 66.7%,rgb(216,219,226) 66.7%,rgb(216,219,226) 100.0%)"></div>
<div class="bl" style="left:366px;top:369.0px;width:52px;height:12px;background:linear-gradient(to right,rgb(207,210,217) 0.0%,rgb(207,210,217) 25.0%,rgb(197,200,207) 25.0%,rgb(197,200,207) 50.0%,rgb(210,213,220) 50.0%,rgb(210,213,220) 75.0%,rgb(200,203,210) 75.0%,rgb(200,203,210) 100.0%)"></div>
<div class="bl" style="left:377px;top:388.0px;width:52px;height:12px;background:linear-gradient(to right,rgb(204,207,214) 0.0%,rgb(204,207,214) 25.0%,rgb(216,219,226) 25.0%,rgb(216,219,226) 50.0%,rgb(206,209,216) 50.0%,rgb(206,209,216) 75.0%,rgb(219,222,229) 75.0%,rgb(219,222,229) 100.0%)"></div>
<div class="bl" style="left:555px;top:369.0px;width:41px;height:12px;background:linear-gradient(to right,rgb(211,214,221) 0.0%,rgb(211,214,221) 33.3%,rgb(201,204,211) 33.3%,rgb(201,204,211) 66.7%,rgb(214,217,224) 66.7%,rgb(214,217,224) 100.0%)"></div>
<div class="bl" style="left:554px;top:388.0px;width:55px;height:12px;background:linear-gradient(to right,rgb(204,207,214) 0.0%,rgb(204,207,214) 25.0%,rgb(216,219,226) 25.0%,rgb(216,219,226) 50.0%,rgb(206,209,216) 50.0%,rgb(206,209,216) 75.0%,rgb(219,222,229) 75.0%,rgb(219,222,229) 100.0%)"></div>
<div class="bl" style="left:698px;top:377.0px;width:50px;height:12px;background:linear-gradient(to right,rgb(200,203,210) 0.0%,rgb(200,203,210) 25.0%,rgb(212,215,222) 25.0%,rgb(212,215,222) 50.0%,rgb(202,205,212) 50.0%,rgb(202,205,212) 75.0%,rgb(215,218,225) 75.0%,rgb(215,218,225) 100.0%)"></div>
<div class="bl" style="left:808px;top:377.0px;width:47px;height:12px;background:linear-gradient(to right,rgb(223,226,233) 0.0%,rgb(223,226,233) 33.3%,rgb(213,216,223) 33.3%,rgb(213,216,223) 66.7%,rgb(203,206,213) 66.7%,rgb(203,206,213) 100.0%)"></div>
<div class="bl" style="left:372px;top:428.5px;width:45px;height:11px;background:linear-gradient(to right,rgb(202,205,212) 0.0%,rgb(202,205,212) 33.3%,rgb(215,218,225) 33.3%,rgb(215,218,225) 66.7%,rgb(205,208,215) 66.7%,rgb(205,208,215) 100.0%)"></div>
<div class="bl" style="left:378px;top:445.5px;width:63px;height:13px;background:linear-gradient(to right,rgb(202,205,212) 0.0%,rgb(202,205,212) 25.0%,rgb(215,218,225) 25.0%,rgb(215,218,225) 50.0%,rgb(205,208,215) 50.0%,rgb(205,208,215) 75.0%,rgb(195,198,205) 75.0%,rgb(195,198,205) 100.0%)"></div>
<div class="bl" style="left:553px;top:428.5px;width:43px;height:11px;background:linear-gradient(to right,rgb(210,213,220) 0.0%,rgb(210,213,220) 33.3%,rgb(200,203,210) 33.3%,rgb(200,203,210) 66.7%,rgb(212,215,222) 66.7%,rgb(212,215,222) 100.0%)"></div>
<div class="bl" style="left:560px;top:446.0px;width:51px;height:12px;background:linear-gradient(to right,rgb(203,206,213) 0.0%,rgb(203,206,213) 25.0%,rgb(216,219,226) 25.0%,rgb(216,219,226) 50.0%,rgb(206,209,216) 50.0%,rgb(206,209,216) 75.0%,rgb(218,221,228) 75.0%,rgb(218,221,228) 100.0%)"></div>
<div class="bl" style="left:697px;top:437.0px;width:46px;height:13px;background:linear-gradient(to right,rgb(214,217,224) 0.0%,rgb(214,217,224) 33.3%,rgb(204,207,214) 33.3%,rgb(204,207,214) 66.7%,rgb(216,219,226) 66.7%,rgb(216,219,226) 100.0%)"></div>
<div class="bl" style="left:800px;top:428.5px;width:64px;height:12px;background:linear-gradient(to right,rgb(203,206,213) 0.0%,rgb(203,206,213) 20.0%,rgb(216,219,226) 20.0%,rgb(216,219,226) 40.0%,rgb(206,209,216) 40.0%,rgb(206,209,216) 60.0%,rgb(218,221,228) 60.0%,rgb(218,221,228) 80.0%,rgb(208,211,218) 80.0%,rgb(208,211,218) 100.0%)"></div>
<div class="bl" style="left:808px;top:449.5px;width:51px;height:11px;background:linear-gradient(to right,rgb(223,226,233) 0.0%,rgb(223,226,233) 25.0%,rgb(213,216,223) 25.0%,rgb(213,216,223) 50.0%,rgb(225,228,235) 50.0%,rgb(225,228,235) 75.0%,rgb(215,218,225) 75.0%,rgb(215,218,225) 100.0%)"></div>
<div class="bl" style="left:369px;top:488.5px;width:64px;height:11px;background:linear-gradient(to right,rgb(206,209,216) 0.0%,rgb(206,209,216) 20.0%,rgb(218,221,228) 20.0%,rgb(218,221,228) 40.0%,rgb(208,211,218) 40.0%,rgb(208,211,218) 60.0%,rgb(221,224,231) 60.0%,rgb(221,224,231) 80.0%,rgb(211,214,221) 80.0%,rgb(211,214,221) 100.0%)"></div>
<div class="bl" style="left:381px;top:508.0px;width:49px;height:12px;background:linear-gradient(to right,rgb(206,209,216) 0.0%,rgb(206,209,216) 25.0%,rgb(218,221,228) 25.0%,rgb(218,221,228) 50.0%,rgb(208,211,218) 50.0%,rgb(208,211,218) 75.0%,rgb(221,224,231) 75.0%,rgb(221,224,231) 100.0%)"></div>
<div class="bl" style="left:550px;top:488.5px;width:40px;height:11px;background:linear-gradient(to right,rgb(213,216,223) 0.0%,rgb(213,216,223) 33.3%,rgb(203,206,213) 33.3%,rgb(203,206,213) 66.7%,rgb(216,219,226) 66.7%,rgb(216,219,226) 100.0%)"></div>
<div class="bl" style="left:554px;top:508.0px;width:53px;height:12px;background:linear-gradient(to right,rgb(216,219,226) 0.0%,rgb(216,219,226) 25.0%,rgb(206,209,216) 25.0%,rgb(206,209,216) 50.0%,rgb(219,222,229) 50.0%,rgb(219,222,229) 75.0%,rgb(209,212,219) 75.0%,rgb(209,212,219) 100.0%)"></div>
<div class="bl" style="left:698px;top:498.5px;width:45px;height:13px;background:linear-gradient(to right,rgb(212,215,222) 0.0%,rgb(212,215,222) 33.3%,rgb(202,205,212) 33.3%,rgb(202,205,212) 66.7%,rgb(215,218,225) 66.7%,rgb(215,218,225) 100.0%)"></div>
<div class="bl" style="left:803px;top:499.5px;width:57px;height:10px;background:linear-gradient(to right,rgb(225,228,235) 0.0%,rgb(225,228,235) 25.0%,rgb(215,218,225) 25.0%,rgb(215,218,225) 50.0%,rgb(228,231,238) 50.0%,rgb(228,231,238) 75.0%,rgb(218,221,228) 75.0%,rgb(218,221,228) 100.0%)"></div>
<div class="bl" style="left:369px;top:548.0px;width:68px;height:12px;background:linear-gradient(to right,rgb(215,218,225) 0.0%,rgb(215,218,225) 20.0%,rgb(205,208,215) 20.0%,rgb(205,208,215) 40.0%,rgb(195,198,205) 40.0%,rgb(195,198,205) 60.0%,rgb(207,210,217) 60.0%,rgb(207,210,217) 80.0%,rgb(197,200,207) 80.0%,rgb(197,200,207) 100.0%)"></div>
<div class="bl" style="left:376px;top:568.0px;width:87px;height:12px;background:linear-gradient(to right,rgb(208,211,218) 0.0%,rgb(208,211,218) 16.7%,rgb(221,224,231) 16.7%,rgb(221,224,231) 33.3%,rgb(211,214,221) 33.3%,rgb(211,214,221) 50.0%,rgb(223,226,233) 50.0%,rgb(223,226,233) 66.7%,rgb(213,216,223) 66.7%,rgb(213,216,223) 83.3%,rgb(203,206,213) 83.3%,rgb(203,206,213) 100.0%)"></div>
<div class="bl" style="left:555px;top:548.0px;width:69px;height:12px;background:linear-gradient(to right,rgb(215,218,225) 0.0%,rgb(215,218,225) 20.0%,rgb(205,208,215) 20.0%,rgb(205,208,215) 40.0%,rgb(195,198,205) 40.0%,rgb(195,198,205) 60.0%,rgb(207,210,217) 60.0%,rgb(207,210,217) 80.0%,rgb(197,200,207) 80.0%,rgb(197,200,207) 100.0%)"></div>
<div class="bl" style="left:555px;top:568.0px;width:85px;height:12px;background:linear-gradient(to right,rgb(223,226,233) 0.0%,rgb(223,226,233) 16.7%,rgb(213,216,223) 16.7%,rgb(213,216,223) 33.3%,rgb(203,206,213) 33.3%,rgb(203,206,213) 50.0%,rgb(216,219,226) 50.0%,rgb(216,219,226) 66.7%,rgb(206,209,216) 66.7%,rgb(206,209,216) 83.3%,rgb(218,221,228) 83.3%,rgb(218,221,228) 100.0%)"></div>
<div class="bl" style="left:695px;top:555.0px;width:48px;height:15px;background:linear-gradient(to right,rgb(207,210,217) 0.0%,rgb(207,210,217) 33.3%,rgb(197,200,207) 33.3%,rgb(197,200,207) 66.7%,rgb(210,213,220) 66.7%,rgb(210,213,220) 100.0%)"></div>
<div class="bl" style="left:800px;top:558.5px;width:66px;height:11px;background:linear-gradient(to right,rgb(211,214,221) 0.0%,rgb(211,214,221) 20.0%,rgb(201,204,211) 20.0%,rgb(201,204,211) 40.0%,rgb(214,217,224) 40.0%,rgb(214,217,224) 60.0%,rgb(204,207,214) 60.0%,rgb(204,207,214) 80.0%,rgb(216,219,226) 80.0%,rgb(216,219,226) 100.0%)"></div>
<div class="bl" style="left:367px;top:607.5px;width:57px;height:13px;background:linear-gradient(to right,rgb(199,202,209) 0.0%,rgb(199,202,209) 25.0%,rgb(211,214,221) 25.0%,rgb(211,214,221) 50.0%,rgb(201,204,211) 50.0%,rgb(201,204,211) 75.0%,rgb(214,217,224) 75.0%,rgb(214,217,224) 100.0%)"></div>
<div class="bl" style="left:378px;top:626.0px;width:58px;height:12px;background:linear-gradient(to right,rgb(218,221,228) 0.0%,rgb(218,221,228) 25.0%,rgb(208,211,218) 25.0%,rgb(208,211,218) 50.0%,rgb(221,224,231) 50.0%,rgb(221,224,231) 75.0%,rgb(211,214,221) 75.0%,rgb(211,214,221) 100.0%)"></div>
<div class="bl" style="left:553px;top:608.5px;width:43px;height:11px;background:linear-gradient(to right,rgb(203,206,213) 0.0%,rgb(203,206,213) 33.3%,rgb(216,219,226) 33.3%,rgb(216,219,226) 66.7%,rgb(206,209,216) 66.7%,rgb(206,209,216) 100.0%)"></div>
<div class="bl" style="left:560px;top:626.0px;width:36px;height:12px;background:linear-gradient(to right,rgb(211,214,221) 0.0%,rgb(211,214,221) 33.3%,rgb(223,226,233) 33.3%,rgb(223,226,233) 66.7%,rgb(213,216,223) 66.7%,rgb(213,216,223) 100.0%)"></div>
<div class="bl" style="left:697px;top:619.5px;width:47px;height:10px;background:linear-gradient(to right,rgb(195,198,205) 0.0%,rgb(195,198,205) 33.3%,rgb(207,210,217) 33.3%,rgb(207,210,217) 66.7%,rgb(197,200,207) 66.7%,rgb(197,200,207) 100.0%)"></div>
<div class="bl" style="left:787px;top:604.5px;width:82px;height:12px;background:linear-gradient(to right,rgb(203,206,213) 0.0%,rgb(203,206,213) 16.7%,rgb(216,219,226) 16.7%,rgb(216,219,226) 33.3%,rgb(206,209,216) 33.3%,rgb(206,209,216) 50.0%,rgb(218,221,228) 50.0%,rgb(218,221,228) 66.7%,rgb(208,211,218) 66.7%,rgb(208,211,218) 83.3%,rgb(221,224,231) 83.3%,rgb(221,224,231) 100.0%)"></div>
<div class="bl" style="left:370px;top:668.5px;width:39px;height:11px;background:linear-gradient(to right,rgb(216,219,226) 0.0%,rgb(216,219,226) 33.3%,rgb(206,209,216) 33.3%,rgb(206,209,216) 66.7%,rgb(219,222,229) 66.7%,rgb(219,222,229) 100.0%)"></div>
<div class="bl" style="left:377px;top:688.0px;width:49px;height:12px;background:linear-gradient(to right,rgb(201,204,211) 0.0%,rgb(201,204,211) 25.0%,rgb(214,217,224) 25.0%,rgb(214,217,224) 50.0%,rgb(204,207,214) 50.0%,rgb(204,207,214) 75.0%,rgb(216,219,226) 75.0%,rgb(216,219,226) 100.0%)"></div>
<div class="bl" style="left:547px;top:668.0px;width:44px;height:12px;background:linear-gradient(to right,rgb(216,219,226) 0.0%,rgb(216,219,226) 33.3%,rgb(206,209,216) 33.3%,rgb(206,209,216) 66.7%,rgb(219,222,229) 66.7%,rgb(219,222,229) 100.0%)"></div>
<div class="bl" style="left:560px;top:688.0px;width:51px;height:12px;background:linear-gradient(to right,rgb(210,213,220) 0.0%,rgb(210,213,220) 25.0%,rgb(223,226,233) 25.0%,rgb(223,226,233) 50.0%,rgb(213,216,223) 50.0%,rgb(213,216,223) 75.0%,rgb(225,228,235) 75.0%,rgb(225,228,235) 100.0%)"></div>
<div class="bl" style="left:699px;top:678.5px;width:45px;height:13px;background:linear-gradient(to right,rgb(200,203,210) 0.0%,rgb(200,203,210) 33.3%,rgb(190,193,200) 33.3%,rgb(190,193,200) 66.7%,rgb(203,206,213) 66.7%,rgb(203,206,213) 100.0%)"></div>
<div class="bl" style="left:798px;top:677.5px;width:57px;height:12px;background:linear-gradient(to right,rgb(209,212,219) 0.0%,rgb(209,212,219) 25.0%,rgb(199,202,209) 25.0%,rgb(199,202,209) 50.0%,rgb(211,214,221) 50.0%,rgb(211,214,221) 75.0%,rgb(201,204,211) 75.0%,rgb(201,204,211) 100.0%)"></div>
<div class="bl" style="left:372px;top:728.5px;width:39px;height:11px;background:linear-gradient(to right,rgb(208,211,218) 0.0%,rgb(208,211,218) 33.3%,rgb(221,224,231) 33.3%,rgb(221,224,231) 66.7%,rgb(211,214,221) 66.7%,rgb(211,214,221) 100.0%)"></div>
<div class="bl" style="left:383px;top:748.0px;width:49px;height:12px;background:linear-gradient(to right,rgb(219,222,229) 0.0%,rgb(219,222,229) 25.0%,rgb(209,212,219) 25.0%,rgb(209,212,219) 50.0%,rgb(199,202,209) 50.0%,rgb(199,202,209) 75.0%,rgb(211,214,221) 75.0%,rgb(211,214,221) 100.0%)"></div>
<div class="bl" style="left:547px;top:728.0px;width:64px;height:12px;background:linear-gradient(to right,rgb(216,219,226) 0.0%,rgb(216,219,226) 20.0%,rgb(206,209,216) 20.0%,rgb(206,209,216) 40.0%,rgb(218,221,228) 40.0%,rgb(218,221,228) 60.0%,rgb(208,211,218) 60.0%,rgb(208,211,218) 80.0%,rgb(221,224,231) 80.0%,rgb(221,224,231) 100.0%)"></div>
<div class="bl" style="left:560px;top:748.0px;width:42px;height:12px;background:linear-gradient(to right,rgb(223,226,233) 0.0%,rgb(223,226,233) 33.3%,rgb(213,216,223) 33.3%,rgb(213,216,223) 66.7%,rgb(203,206,213) 66.7%,rgb(203,206,213) 100.0%)"></div>
<div class="bl" style="left:698px;top:739.0px;width:46px;height:12px;background:linear-gradient(to right,rgb(210,213,220) 0.0%,rgb(210,213,220) 33.3%,rgb(200,203,210) 33.3%,rgb(200,203,210) 66.7%,rgb(190,193,200) 66.7%,rgb(190,193,200) 100.0%)"></div>
<div class="bl" style="left:797px;top:738.0px;width:78px;height:12px;background:linear-gradient(to right,rgb(223,226,233) 0.0%,rgb(223,226,233) 16.7%,rgb(213,216,223) 16.7%,rgb(213,216,223) 33.3%,rgb(203,206,213) 33.3%,rgb(203,206,213) 50.0%,rgb(216,219,226) 50.0%,rgb(216,219,226) 66.7%,rgb(206,209,216) 66.7%,rgb(206,209,216) 83.3%,rgb(218,221,228) 83.3%,rgb(218,221,228) 100.0%)"></div>
<div class="td" style="left:401.5px;top:245px">A</div>
<div class="td" style="left:555px;top:265px">H</div>
<div class="td" style="left:588px;top:265px">A</div>
<div class="td" style="left:371px;top:305px">Y</div>
<div class="td" style="left:377px;top:325px">Y</div>
<div class="td" style="left:581px;top:305px">CA</div>
<div class="td" style="left:808px;top:315px">Y</div>
<div class="td" style="left:547px;top:365px">Y</div>
<div class="td" style="left:369px;top:425px">V</div>
<div class="td" style="left:547px;top:425px">C</div>
<div class="td" style="left:555px;top:445px">C</div>
<div class="td" style="left:788.5px;top:423px">G</div>
<div class="td" style="left:851px;top:423px">_WAL-</div>
<div class="td" style="left:547px;top:485px">Y</div>
<div class="td" style="left:436px;top:545px">3</div>
<div class="td" style="left:547px;top:545px">f</div>
<div class="td" style="left:793px;top:555px">f</div>
<div class="td" style="left:555px;top:625px">C</div>
<div class="td" style="left:597px;top:625px">2</div>
<div class="td" style="left:857px;top:675px">2</div>
<div class="td" style="left:555px;top:685px">U</div>
<div class="td" style="left:367px;top:725px">C</div>
<div class="td" style="left:555px;top:745px">U</div>
<div class="bl" style="left:1459px;top:248.5px;width:37px;height:12px;background:rgb(205,207,214)"></div>
<div class="bl" style="left:1636px;top:248.5px;width:37px;height:12px;background:rgb(205,207,214)"></div>
<div class="bl" style="left:1459px;top:308.5px;width:37px;height:12px;background:rgb(205,207,214)"></div>
<div class="bl" style="left:1636px;top:308.5px;width:37px;height:12px;background:rgb(205,207,214)"></div>
<div class="bl" style="left:1459px;top:368.5px;width:37px;height:12px;background:rgb(205,207,214)"></div>
<div class="bl" style="left:1636px;top:368.5px;width:37px;height:12px;background:rgb(205,207,214)"></div>
<div class="bl" style="left:1459px;top:428.5px;width:37px;height:12px;background:rgb(205,207,214)"></div>
<div class="bl" style="left:1636px;top:428.5px;width:37px;height:12px;background:rgb(205,207,214)"></div>
<div class="bl" style="left:1459px;top:488.5px;width:37px;height:12px;background:rgb(205,207,214)"></div>
<div class="bl" style="left:1636px;top:488.5px;width:37px;height:12px;background:rgb(205,207,214)"></div>
<div class="bl" style="left:1459px;top:548.5px;width:37px;height:12px;background:rgb(205,207,214)"></div>
<div class="bl" style="left:1636px;top:548.5px;width:37px;height:12px;background:rgb(205,207,214)"></div>
<div class="bl" style="left:1459px;top:608.5px;width:37px;height:12px;background:rgb(205,207,214)"></div>
<div class="bl" style="left:1636px;top:608.5px;width:37px;height:12px;background:rgb(205,207,214)"></div>
<div class="bl" style="left:1459px;top:668.5px;width:37px;height:12px;background:rgb(205,207,214)"></div>
<div class="bl" style="left:1636px;top:668.5px;width:37px;height:12px;background:rgb(205,207,214)"></div>
<div class="bl" style="left:1459px;top:728.5px;width:37px;height:12px;background:rgb(205,207,214)"></div>
<div class="bl" style="left:1636px;top:728.5px;width:37px;height:12px;background:rgb(205,207,214)"></div>
<div class="td" style="left:819px;top:625px">mall</div>
<div class="a" style="left:404px;top:144px;width:72px;height:47px;border:1.2px solid #ff3030"></div>
<svg class="a" style="left:0;top:0" width="1841" height="766" viewBox="0 0 1841 766"><path d="M245 529.5L425.7 201L423.3 198.7L437.7 188L436.9 207L433.5 205L246.5 529.8Z" fill="#ff3333"/></svg>
<div class="a" style="left:1611px;top:-30px;width:189px;height:32.5px;border:1px solid #dcdfe6;border-radius:4px"></div>
<div class="a" style="left:1810px;top:-6px;width:60px;height:12px;border-radius:6px;background:#f2b20f"></div>
<div class="a" style="left:1832px;top:-52px;width:104px;height:104px;border-radius:50%;background:rgba(30,30,30,0.45)"></div>
<div class="a" style="left:0;top:0;width:1841px;height:1.2px;background:#5a5a5a"></div>
</body></html>
